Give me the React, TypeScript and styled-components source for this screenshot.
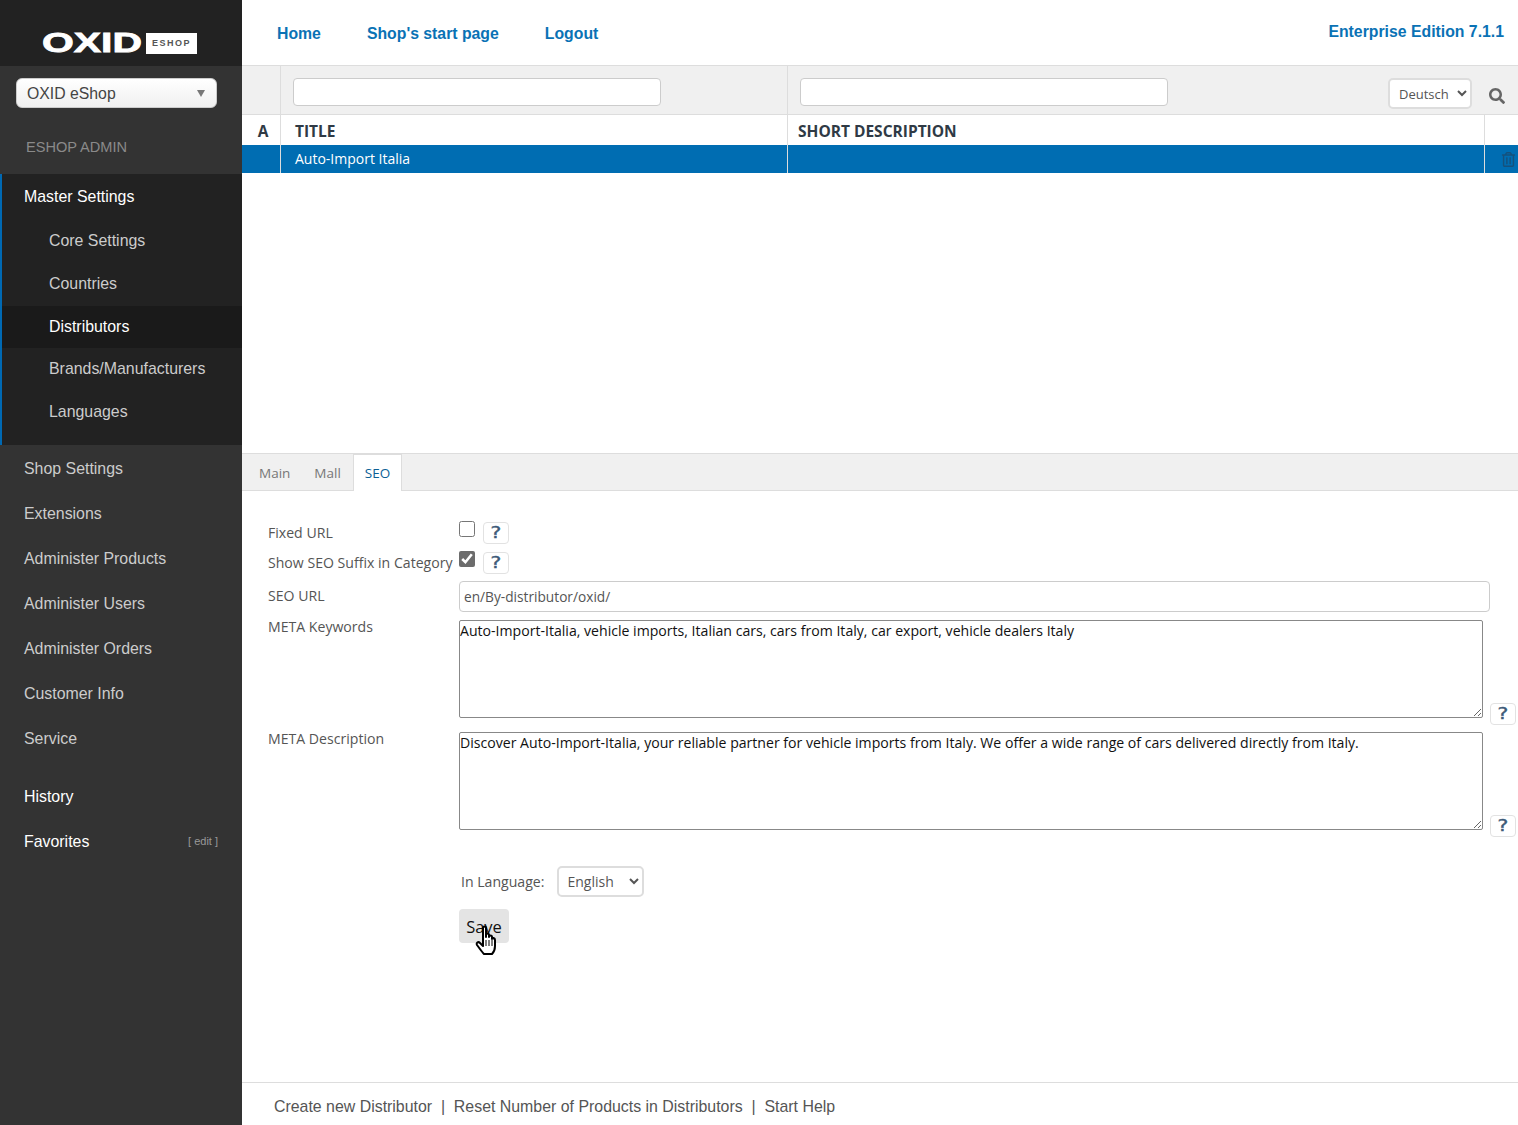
import React from "react";
import styled, { createGlobalStyle } from "styled-components";
import { FaSearch, FaRegTrashAlt } from "react-icons/fa";

const Global = createGlobalStyle`
  html, body { margin: 0; padding: 0; height: 100%; }
  body { font-family: "Liberation Sans", Arial, sans-serif; background: #fff; }
`;

const FORM_FONT = `"Open Sans", "Noto Sans", sans-serif`;

const Page = styled.div`
  display: grid;
  grid-template-columns: 242px 1fr;
  width: 1518px;
  height: 1125px;
  overflow: hidden;
`;

/* sidebar */
const Sidebar = styled.aside`
  background: #333;
  display: flex;
  flex-direction: column;
`;

const LogoBar = styled.div`
  height: 66px;
  background: #222;
  display: flex;
  align-items: center;
  padding: 20px 0 0 42px;
  box-sizing: border-box;
  gap: 3px;
`;

const LogoWord = styled.span`
  font: bold 28px "Liberation Sans", sans-serif;
  color: #fff;
  width: 101px;
  display: inline-block;
  transform: scaleX(1.46);
  transform-origin: left center;
  -webkit-text-stroke: 0.8px #fff;
  line-height: 22px;
`;

const LogoTag = styled.span`
  background: #fff;
  color: #555;
  width: 51px;
  height: 21px;
  display: flex;
  align-items: center;
  justify-content: center;
  font: bold 9px "Liberation Sans", sans-serif;
  letter-spacing: 1.5px;
`;

const ShopPicker = styled.div`
  margin: 12px 0 0 16px;
  width: 201px;
  height: 30px;
  box-sizing: border-box;
  border-radius: 6px;
  border: 1px solid #ccc;
  background: linear-gradient(#fff, #f0f0f0);
  color: #444;
  font-size: 15.8px;
  display: flex;
  align-items: center;
  justify-content: space-between;
  padding: 1px 11px 0 10px;
`;

const PickerArrow = styled.span`
  width: 0;
  height: 0;
  border-left: 4px solid transparent;
  border-right: 4px solid transparent;
  border-top: 7px solid #777;
`;

const AdminTitle = styled.div`
  height: 66px;
  line-height: 78px;
  padding-left: 26px;
  box-sizing: border-box;
  color: #8a8a8a;
  font-size: 14.6px;
`;

const MasterBlock = styled.div`
  background: #222;
  border-left: 2px solid #0069b3;
  height: 271px;
  box-sizing: border-box;
`;

const MasterHead = styled.div`
  height: 46px;
  line-height: 46px;
  padding-left: 22px;
  color: #fff;
  font-size: 15.9px;
`;

const SubItem = styled.div<{ $active?: boolean }>`
  height: 42.75px;
  line-height: 42px;
  padding-left: 47px;
  font-size: 15.9px;
  color: ${(p) => (p.$active ? "#fff" : "#ccc")};
  background: ${(p) => (p.$active ? "#1a1a1a" : "transparent")};
`;

const NavGroup = styled.div`
  padding-top: 1px;
`;

const NavItem = styled.div`
  height: 45px;
  line-height: 45px;
  padding-left: 24px;
  font-size: 15.9px;
  color: #ccc;
`;

const BottomItem = styled(NavItem)`
  color: #fff;
  display: flex;
  justify-content: space-between;
  padding-right: 24px;
`;

const BottomGroup = styled.div`
  margin-top: 13px;
`;

const EditLink = styled.span`
  font-size: 11px;
  color: #999;
`;

/* main column */
const Main = styled.main`
  display: flex;
  flex-direction: column;
  min-width: 0;
`;

const TopNav = styled.nav`
  height: 66px;
  box-sizing: border-box;
  border-bottom: 1px solid #ddd;
  display: flex;
  justify-content: space-between;
  padding: 0 14px 0 35px;
  color: #0a72b5;
  font-weight: bold;
  font-size: 15.8px;
`;

const NavLinks = styled.div`
  display: flex;
  gap: 46px;
  padding-top: 25px;
`;

const Edition = styled.div`
  padding-top: 23px;
`;

const columns = `39px 507px 697px 33px`;

const FilterRow = styled.div`
  display: grid;
  grid-template-columns: ${columns};
  height: 49px;
  background: #f0f0f0;
  border-bottom: 1px solid #ddd;
  box-sizing: border-box;
`;

const FilterCell = styled.div`
  border-right: 1px solid #ddd;
  padding: 12px 0 0 12px;
`;

const EmptyCell = styled.div`
  border-right: 1px solid #ddd;
`;

const FilterInput = styled.input`
  width: 368px;
  height: 28px;
  box-sizing: border-box;
  border: 1px solid #ccc;
  border-radius: 4px;
  background: #fff;
  display: block;
`;

const DescFilter = styled.div`
  grid-column: 3 / span 2;
  display: flex;
  align-items: flex-start;
  padding: 12px 0 0 12px;
`;

const LangSelect = styled.select`
  margin-left: 220px;
  width: 84px;
  height: 31px;
  box-sizing: border-box;
  border: 2px solid #ddd;
  border-radius: 5px;
  background: #fff;
  color: #555;
  font: 13px ${FORM_FONT};
  padding-left: 5px;
`;

const SearchButton = styled.span`
  margin: 10px 0 0 17px;
  color: #666;
  display: flex;
`;

const HeadRow = styled.div`
  display: grid;
  grid-template-columns: ${columns};
  height: 30px;
  font: bold 15.5px ${FORM_FONT};
  color: #2f3a45;
`;

const HeadCell = styled.div<{ $center?: boolean }>`
  border-right: 1px solid #ddd;
  line-height: 32px;
  padding-left: ${(p) => (p.$center ? "4px" : "14px")};
  text-align: ${(p) => (p.$center ? "center" : "left")};
  &:last-child { border-right: 0; }
`;

const HeadDesc = styled(HeadCell)`
  padding-left: 10px;
`;

const DataRow = styled.div`
  display: grid;
  grid-template-columns: ${columns};
  height: 28px;
  background: #006db2;
  color: #fff;
  font: 14px ${FORM_FONT};
`;

const DataCell = styled.div`
  border-right: 1px solid #ddd;
  line-height: 28px;
  padding-left: 14px;
  &:last-child { border-right: 0; padding-left: 16px; color: #15517c; display: flex; align-items: center; }
`;

const ListSpace = styled.div`
  height: 280px;
`;

const Tabs = styled.div`
  height: 38px;
  box-sizing: border-box;
  background: #f0f0f0;
  border-top: 1px solid #ddd;
  border-bottom: 1px solid #ddd;
  display: flex;
  padding-left: 5px;
  font: 13.5px ${FORM_FONT};
`;

const Tab = styled.div<{ $active?: boolean }>`
  height: 37px;
  line-height: 36px;
  padding: 0 11px;
  color: ${(p) => (p.$active ? "#0b5f96" : "#777")};
  background: ${(p) => (p.$active ? "#fff" : "transparent")};
  border: 1px solid ${(p) => (p.$active ? "#ddd" : "transparent")};
  border-bottom: 0;
  box-sizing: border-box;
`;

const Form = styled.form`
  flex: 1;
  position: relative;
  padding: 30px 3px 0 26px;
  font: 14.1px ${FORM_FONT};
  color: #555;
`;

const Row = styled.div`
  display: grid;
  grid-template-columns: 191px 1fr;
  height: 30px;
`;

const UrlRow = styled(Row)`
  height: 31px;
  margin: 0 0 8px;
`;

const AreaRow = styled(Row)`
  height: 112px;
`;

const Label = styled.label`
  line-height: 24px;
  white-space: nowrap;
`;

const UrlLabel = styled(Label)`
  line-height: 30px;
`;

const AreaLabel = styled(Label)`
  line-height: 14px;
`;

const Check = styled.input`
  width: 16px;
  height: 16px;
  margin: 0;
  accent-color: #6c6c6c;
`;

const CheckLine = styled.div`
  display: flex;
  align-items: flex-start;
  gap: 8px;
`;

const Help = styled.span`
  width: 26px;
  height: 22px;
  box-sizing: border-box;
  border: 1px solid #e2e2e2;
  border-radius: 4px;
  background: #fff;
  color: #3c5a78;
  font: 15px/21px "DejaVu Sans", sans-serif;
  -webkit-text-stroke: 0.4px #3c5a78;
  text-align: center;
  display: block;
  margin-top: 1px;
`;

const HelpMark = styled.span`
  display: inline-block;
  transform: scaleX(1.35);
`;

const AreaHelp = styled(Help)`
  margin-top: 83px;
`;

const UrlInput = styled.input`
  width: 1031px;
  height: 31px;
  box-sizing: border-box;
  border: 1px solid #ccc;
  border-radius: 4px;
  padding: 0 4px;
  font: 13.7px ${FORM_FONT};
  color: #555;
`;

const AreaLine = styled.div`
  display: flex;
  align-items: flex-start;
  gap: 7px;
`;

const Area = styled.textarea`
  width: 1024px;
  height: 98px;
  box-sizing: border-box;
  border: 1px solid #888;
  border-radius: 2px;
  padding: 0;
  margin: 0;
  font: 14.1px ${FORM_FONT};
  color: #111;
  display: block;
`;

const LangLine = styled.div`
  display: flex;
  align-items: center;
  gap: 13px;
  margin: 22px 0 0 193px;
`;

const BigSelect = styled.select`
  width: 87px;
  height: 31px;
  box-sizing: border-box;
  border: 2px solid #ddd;
  border-radius: 5px;
  background: #fff;
  color: #555;
  font: 14px ${FORM_FONT};
  padding-left: 4px;
`;

const SaveButton = styled.button`
  display: block;
  margin: 12px 0 0 191px;
  width: 50px;
  height: 34px;
  border: 0;
  border-radius: 4px;
  background: #e4e4e4;
  color: #111;
  font: 16.5px ${FORM_FONT};
  padding: 0;
`;

const Pointer = styled.svg`
  position: absolute;
  left: 233px;
  top: 434px;
`;

const Footer = styled.footer`
  height: 43px;
  box-sizing: border-box;
  border-top: 1px solid #ddd;
  padding-left: 32px;
  line-height: 48px;
  color: #555;
  font-size: 15.9px;
  white-space: pre;
`;

const subItems = ["Core Settings", "Countries", "Distributors", "Brands/Manufacturers", "Languages"];
const navItems = ["Shop Settings", "Extensions", "Administer Products", "Administer Users", "Administer Orders", "Customer Info", "Service"];

export default function App() {
  return (
    <Page>
      <Global />
      <Sidebar>
        <LogoBar>
          <LogoWord>OXID</LogoWord>
          <LogoTag>ESHOP</LogoTag>
        </LogoBar>
        <ShopPicker>
          OXID eShop
          <PickerArrow />
        </ShopPicker>
        <AdminTitle>ESHOP ADMIN</AdminTitle>
        <MasterBlock>
          <MasterHead>Master Settings</MasterHead>
          {subItems.map((s) => (
            <SubItem key={s} $active={s === "Distributors"}>{s}</SubItem>
          ))}
        </MasterBlock>
        <NavGroup>
          {navItems.map((s) => (
            <NavItem key={s}>{s}</NavItem>
          ))}
        </NavGroup>
        <BottomGroup>
          <BottomItem>History</BottomItem>
          <BottomItem>
            Favorites
            <EditLink>[ edit ]</EditLink>
          </BottomItem>
        </BottomGroup>
      </Sidebar>
      <Main>
        <TopNav>
          <NavLinks>
            <span>Home</span>
            <span>Shop's start page</span>
            <span>Logout</span>
          </NavLinks>
          <Edition>Enterprise Edition 7.1.1</Edition>
        </TopNav>
        <FilterRow>
          <EmptyCell />
          <FilterCell><FilterInput /></FilterCell>
          <DescFilter>
            <FilterInput />
            <LangSelect defaultValue="Deutsch">
              <option>Deutsch</option>
              <option>English</option>
            </LangSelect>
            <SearchButton><FaSearch size={16} /></SearchButton>
          </DescFilter>
        </FilterRow>
        <HeadRow>
          <HeadCell $center>A</HeadCell>
          <HeadCell>TITLE</HeadCell>
          <HeadDesc>SHORT DESCRIPTION</HeadDesc>
          <HeadCell />
        </HeadRow>
        <DataRow>
          <DataCell />
          <DataCell>Auto-Import Italia</DataCell>
          <DataCell />
          <DataCell><FaRegTrashAlt size={15} /></DataCell>
        </DataRow>
        <ListSpace />
        <Tabs>
          <Tab>Main</Tab>
          <Tab>Mall</Tab>
          <Tab $active>SEO</Tab>
        </Tabs>
        <Form>
          <Row>
            <Label>Fixed URL</Label>
            <CheckLine><Check type="checkbox" /><Help><HelpMark>?</HelpMark></Help></CheckLine>
          </Row>
          <Row>
            <Label>Show SEO Suffix in Category</Label>
            <CheckLine><Check type="checkbox" defaultChecked /><Help><HelpMark>?</HelpMark></Help></CheckLine>
          </Row>
          <UrlRow>
            <UrlLabel>SEO URL</UrlLabel>
            <UrlInput defaultValue="en/By-distributor/oxid/" />
          </UrlRow>
          <AreaRow>
            <AreaLabel>META Keywords</AreaLabel>
            <AreaLine>
              <Area defaultValue="Auto-Import-Italia, vehicle imports, Italian cars, cars from Italy, car export, vehicle dealers Italy" />
              <AreaHelp><HelpMark>?</HelpMark></AreaHelp>
            </AreaLine>
          </AreaRow>
          <AreaRow>
            <AreaLabel>META Description</AreaLabel>
            <AreaLine>
              <Area defaultValue="Discover Auto-Import-Italia, your reliable partner for vehicle imports from Italy. We offer a wide range of cars delivered directly from Italy." />
              <AreaHelp><HelpMark>?</HelpMark></AreaHelp>
            </AreaLine>
          </AreaRow>
          <LangLine>
            In Language:
            <BigSelect defaultValue="English">
              <option>English</option>
              <option>Deutsch</option>
            </BigSelect>
          </LangLine>
          <SaveButton type="button">Save</SaveButton>
          <Pointer width="24" height="30" viewBox="0 0 24 30">
            <path
              d="M8 3c0-2 3-2 3 0v9l0-2c0-2 3-2 3 0v2c0-2 3-2 3 0v2c0-2 3-1 3 1v6c0 4-2 7-3 8H9c-2-2-4-5-7-9-1-2 1-4 3-2l3 3z"
              fill="#fff"
              stroke="#000"
              strokeWidth="2"
              strokeLinejoin="round"
            />
            <path d="M11 15v6M14 15v6M17 15v6" stroke="#000" strokeWidth="1" />
          </Pointer>
        </Form>
        <Footer>{"Create new Distributor  |  Reset Number of Products in Distributors  |  Start Help"}</Footer>
      </Main>
    </Page>
  );
}
